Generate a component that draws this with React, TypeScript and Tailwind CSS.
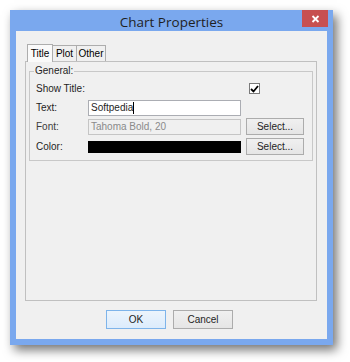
import React from "react";

const ui = { fontFamily: "'Liberation Sans', Arial, sans-serif" };

function Btn({ label, className = "" }: { label: string; className?: string }) {
  return (
    <div
      className={
        "flex items-center justify-center border border-[#acacac] bg-gradient-to-b from-[#f0f0f0] to-[#e5e5e5] text-[10px] text-[#1e1e1e] " +
        className
      }
    >
      {label}
    </div>
  );
}

export default function App() {
  return (
    <div className="w-[350px] h-[362px] bg-white pt-[10px] pl-[10px] overflow-hidden" style={ui}>
      <div className="w-[323px] h-[335px] bg-[#7aa8ee] flex flex-col shadow-[4px_5px_10px_rgba(0,0,0,0.55)]">
        {/* title bar */}
        <div className="h-[21px] flex relative">
          <div
            className="flex-1 flex items-center justify-center text-[13.5px] text-[#1f1f1f] pt-[3px]"
            style={{ fontFamily: "'Open Sans', 'Noto Sans', sans-serif" }}
          >
            Chart Properties
          </div>
          <div className="absolute right-[5px] top-0 w-[26px] h-[17px] bg-[#c75050] flex items-center justify-center">
            <svg width="9" height="8" viewBox="0 0 9 8">
              <path d="M1.5 1 L7.5 7 M7.5 1 L1.5 7" stroke="white" strokeWidth="1.8" />
            </svg>
          </div>
        </div>
        {/* client */}
        <div className="flex-1 mx-[6px] mb-[6px] bg-[#f0f0f0] flex flex-col pl-[9px] pr-[10px] pt-[12px]">
          {/* tabs */}
          <div className="flex h-[18px] items-end pl-[2px]">
            <div className="h-[18px] w-[26px] border border-b-0 border-[#adadad] bg-[#fafafa] text-[10px] flex items-center justify-center relative top-[1px] z-10">
              Title
            </div>
            <div className="h-[16px] w-[24px] border border-b-0 border-l-0 border-[#adadad] bg-[#f0f0f0] text-[10px] flex items-center justify-center">
              Plot
            </div>
            <div className="h-[16px] w-[29px] border border-b-0 border-l-0 border-[#adadad] bg-[#f0f0f0] text-[10px] flex items-center justify-center">
              Other
            </div>
          </div>
          {/* panel */}
          <div className="h-[240px] border border-[#c0c0c0] bg-[#f0f0f0] px-[3px] pt-[9px]">
            <div className="relative border border-[#c8c8c8] h-[90px] px-[6px] pt-[8px] text-[10px] text-[#1e1e1e]">
              <div className="absolute -top-[7px] left-[4px] bg-[#f0f0f0] px-[1px] leading-[12px] text-[10px]">
                General:
              </div>
              <div className="flex items-center h-[17px]">
                <div className="w-[52px]">Show Title:</div>
                <div className="w-[161px]" />
                <div className="w-[11px] h-[11px] border border-[#7a7a7a] bg-white flex items-center justify-center">
                  <svg width="9" height="8" viewBox="0 0 9 8">
                    <path d="M1 4 L3.5 6.5 L8 1" stroke="black" strokeWidth="1.8" fill="none" />
                  </svg>
                </div>
              </div>
              <div className="flex items-center h-[19px] mt-[1px]">
                <div className="w-[52px]">Text:</div>
                <div className="w-[153px] h-[16px] border border-[#abadb3] bg-white flex items-center px-[2px] text-[10px]">
                  Softpedia<span className="w-px h-[12px] bg-black" />
                </div>
              </div>
              <div className="flex items-center h-[19px]">
                <div className="w-[52px] text-[#3c3c3c]">Font:</div>
                <div className="w-[153px] h-[16px] border border-[#c5c5c5] bg-[#f0f0f0] flex items-center px-[2px] text-[#8a8a8a]">
                  Tahoma Bold, 20
                </div>
                <Btn label="Select..." className="ml-[5px] w-[58px] h-[17px]" />
              </div>
              <div className="flex items-center h-[19px] mt-[1px]">
                <div className="w-[52px]">Color:</div>
                <div className="w-[153px] h-[12px] bg-black" />
                <Btn label="Select..." className="ml-[5px] w-[58px] h-[17px]" />
              </div>
            </div>
          </div>
          {/* buttons */}
          <div className="flex justify-center gap-[7px] pt-[9px] pr-[3px]">
            <div className="w-[60px] h-[19px] border border-[#7eb4ea] bg-gradient-to-b from-[#ecf4fc] to-[#dcecfc] flex items-center justify-center text-[10px] text-[#1e1e1e]">
              OK
            </div>
            <Btn label="Cancel" className="w-[60px] h-[19px]" />
          </div>
        </div>
      </div>
    </div>
  );
}
